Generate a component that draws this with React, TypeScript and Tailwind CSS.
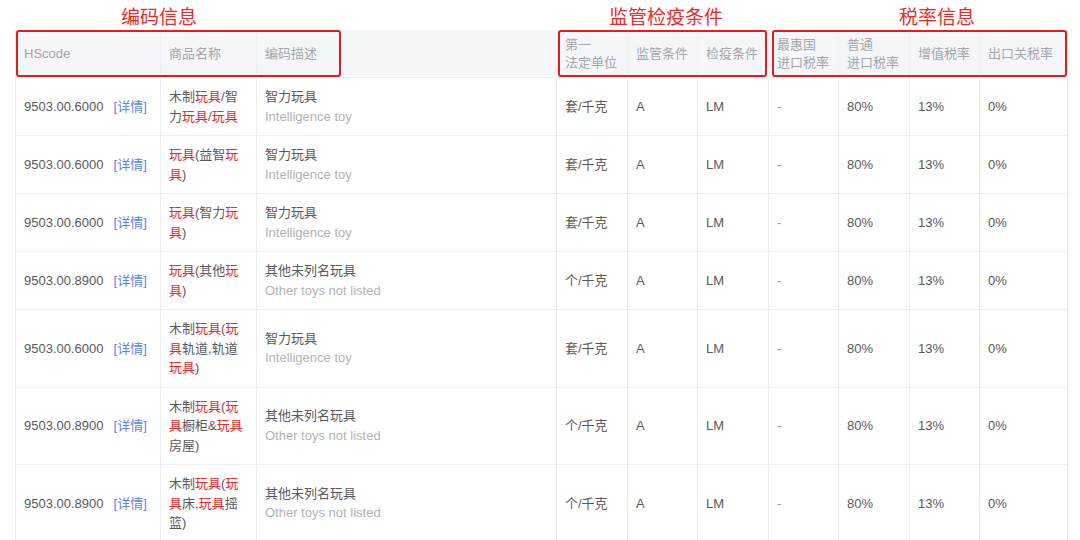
import React from 'react';

type Seg = { t: string; hl?: boolean };

type Row = {
  code: string;
  name: Seg[][];
  descCn: string;
  descEn: string;
  unit: string;
};

const h = (t: string): Seg => ({ t, hl: true });
const n = (t: string): Seg => ({ t });

const rows: Row[] = [
  {
    code: '9503.00.6000',
    name: [[n('木制'), h('玩具'), n('/智')], [n('力'), h('玩具'), n('/'), h('玩具')]],
    descCn: '智力玩具',
    descEn: 'Intelligence toy',
    unit: '套/千克',
  },
  {
    code: '9503.00.6000',
    name: [[h('玩具'), n('(益智'), h('玩')], [h('具'), n(')')]],
    descCn: '智力玩具',
    descEn: 'Intelligence toy',
    unit: '套/千克',
  },
  {
    code: '9503.00.6000',
    name: [[h('玩具'), n('(智力'), h('玩')], [h('具'), n(')')]],
    descCn: '智力玩具',
    descEn: 'Intelligence toy',
    unit: '套/千克',
  },
  {
    code: '9503.00.8900',
    name: [[h('玩具'), n('(其他'), h('玩')], [h('具'), n(')')]],
    descCn: '其他未列名玩具',
    descEn: 'Other toys not listed',
    unit: '个/千克',
  },
  {
    code: '9503.00.6000',
    name: [[n('木制'), h('玩具'), n('('), h('玩')], [h('具'), n('轨道,轨道')], [h('玩具'), n(')')]],
    descCn: '智力玩具',
    descEn: 'Intelligence toy',
    unit: '套/千克',
  },
  {
    code: '9503.00.8900',
    name: [[n('木制'), h('玩具'), n('('), h('玩')], [h('具'), n('橱柜&'), h('玩具')], [n('房屋)')]],
    descCn: '其他未列名玩具',
    descEn: 'Other toys not listed',
    unit: '个/千克',
  },
  {
    code: '9503.00.8900',
    name: [[n('木制'), h('玩具'), n('('), h('玩')], [h('具'), n('床,'), h('玩具'), n('摇')], [n('篮)')]],
    descCn: '其他未列名玩具',
    descEn: 'Other toys not listed',
    unit: '个/千克',
  },
];

const grid =
  'grid grid-cols-[145px_96px_300px_71px_70px_71px_70px_71px_70px_88px]';

const headCell =
  'flex items-center pl-2 border-r border-[#eef0f4] text-[#a3a6ad] leading-[18px]';
const bodyCell =
  'flex items-center pl-2 py-[9px] border-r border-b border-[#eceef2] leading-[19.5px]';

const App: React.FC = () => {
  return (
    <div
      className="w-[1080px] h-[540px] overflow-hidden bg-white text-[13px] text-[#5a5a5a]"
      style={{ fontFamily: '"Liberation Sans", "Noto Sans CJK SC", sans-serif' }}
    >
      <div className="relative">
        {/* annotation labels */}
        <div className="flex h-[30px] pt-[7px] text-[19px] leading-[22px] text-[#ec2a2a]">
          <div className="w-[121px]" />
          <div className="w-[488px]">编码信息</div>
          <div className="w-[290px]">监管检疫条件</div>
          <div>税率信息</div>
        </div>

        <div className="pl-[15px]">
          <div className="border-l border-[#eceef2] w-[1052px]">
            <div className={`${grid} h-[48px] bg-[#f4f6f9] border-b border-[#eceef2]`}>
              <div className={headCell}>HScode</div>
              <div className={headCell}>商品名称</div>
              <div className={`${headCell} border-[#ffffff]`}>编码描述</div>
              <div className={headCell}>第一<br />法定单位</div>
              <div className={headCell}>监管条件</div>
              <div className={headCell}>检疫条件</div>
              <div className={headCell}>最惠国<br />进口税率</div>
              <div className={headCell}>普通<br />进口税率</div>
              <div className={headCell}>增值税率</div>
              <div className={headCell}>出口关税率</div>
            </div>

            {rows.map((r, i) => (
              <div key={i} className={grid}>
                <div className={bodyCell}>
                  <span>{r.code}</span>
                  <span className="ml-[10px] text-[#5b85e6]">[详情]</span>
                </div>
                <div className={`${bodyCell} flex-col items-start justify-center`}>
                  {r.name.map((line, j) => (
                    <div key={j} className="whitespace-nowrap">
                      {line.map((s, k) => (
                        <span key={k} className={s.hl ? 'text-[#f0262b]' : ''}>
                          {s.t}
                        </span>
                      ))}
                    </div>
                  ))}
                </div>
                <div className={`${bodyCell} flex-col items-start justify-center`}>
                  <div>{r.descCn}</div>
                  <div className="text-[#b3b3b3]">{r.descEn}</div>
                </div>
                <div className={bodyCell}>{r.unit}</div>
                <div className={bodyCell}>A</div>
                <div className={bodyCell}>LM</div>
                <div className={`${bodyCell} text-[#999]`}>-</div>
                <div className={bodyCell}>80%</div>
                <div className={bodyCell}>13%</div>
                <div className={bodyCell}>0%</div>
              </div>
            ))}
          </div>
        </div>

        {/* red annotation frames */}
        <div className="absolute left-[16px] top-[30px] w-[325px] h-[47px] border-2 border-[#e41c1c] rounded-[3px]" />
        <div className="absolute left-[558px] top-[30px] w-[209px] h-[47px] border-2 border-[#e41c1c] rounded-[3px]" />
        <div className="absolute left-[772px] top-[30px] w-[295px] h-[47px] border-2 border-[#e41c1c] rounded-[3px]" />
      </div>
    </div>
  );
};

export default App;
